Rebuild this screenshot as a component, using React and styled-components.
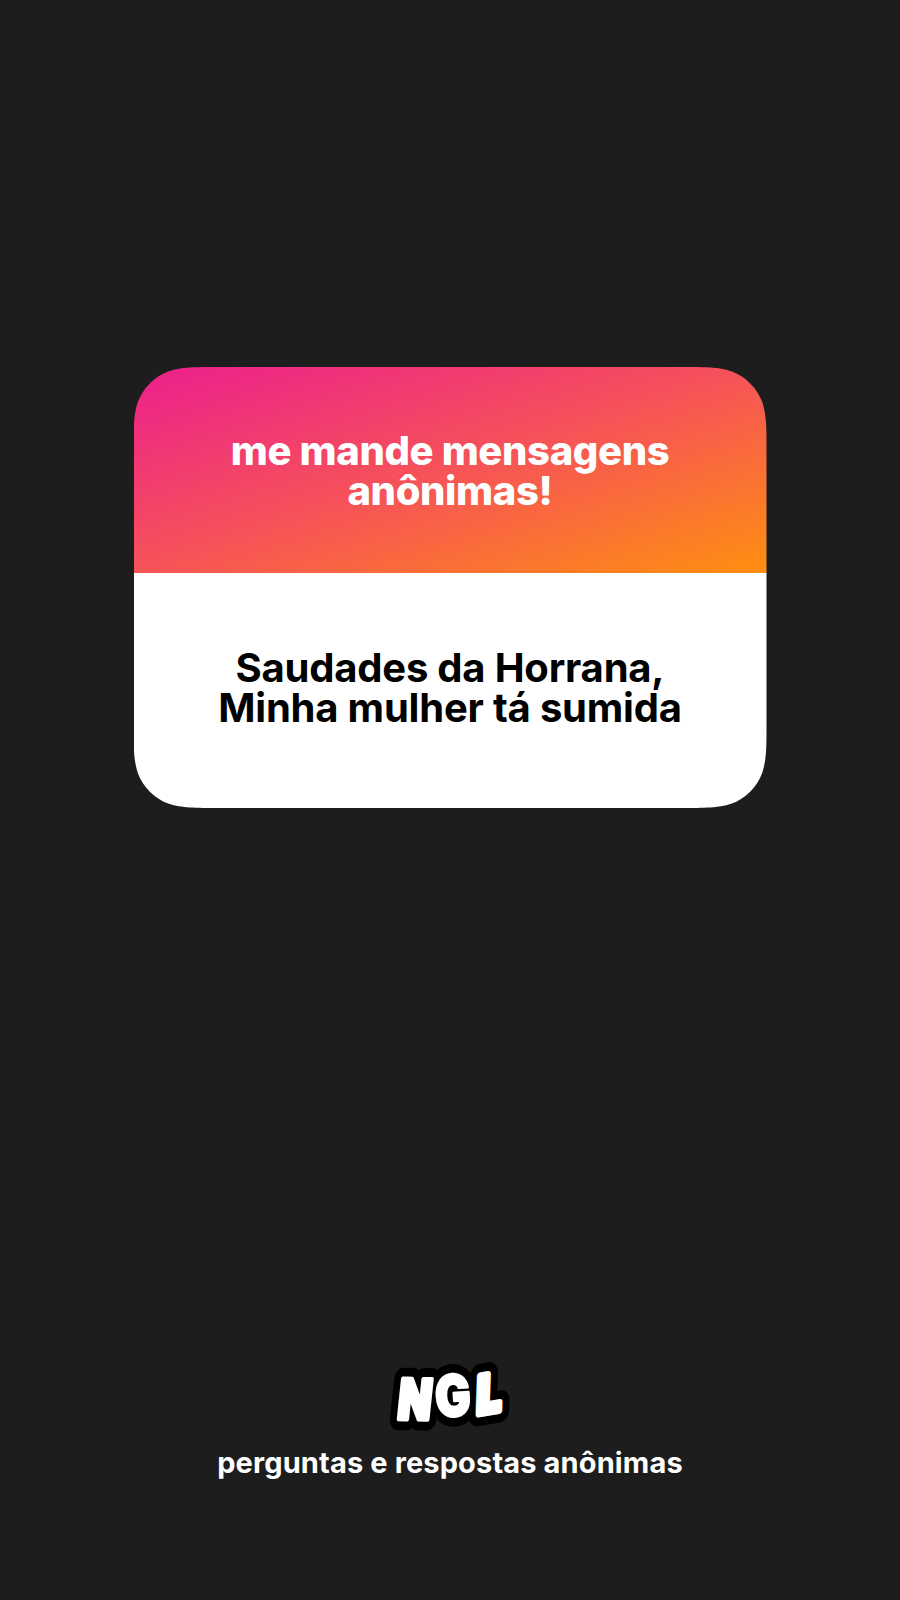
import React from "react";
import styled, { createGlobalStyle } from "styled-components";

const CARD_W = 633;
const CARD_H = 441;

// Rounded rectangle with continuous-curvature corners.
function squircle(w, h, r) {
  const p = [1.528665, 1.08849296, 0.86840694, 0.63149379, 0.07491139, 0.37282383, 0.16905956].map((v) => v * r);
  const [a, b, c, d, e, f, g] = p;
  return [
    `M${a} 0 L${w - a} 0`,
    `C${w - b} 0 ${w - c} 0 ${w - d} ${e}`,
    `C${w - f} ${g} ${w - g} ${f} ${w - e} ${d}`,
    `C${w} ${c} ${w} ${b} ${w} ${a} L${w} ${h - a}`,
    `C${w} ${h - b} ${w} ${h - c} ${w - e} ${h - d}`,
    `C${w - g} ${h - f} ${w - f} ${h - g} ${w - d} ${h - e}`,
    `C${w - c} ${h} ${w - b} ${h} ${w - a} ${h} L${a} ${h}`,
    `C${b} ${h} ${c} ${h} ${d} ${h - e}`,
    `C${f} ${h - g} ${g} ${h - f} ${e} ${h - d}`,
    `C0 ${h - c} 0 ${h - b} 0 ${h - a} L0 ${a}`,
    `C0 ${b} 0 ${c} ${e} ${d}`,
    `C${g} ${f} ${f} ${g} ${d} ${e}`,
    `C${c} 0 ${b} 0 ${a} 0 Z`,
  ].join(" ");
}

const GlobalStyle = createGlobalStyle`
  body { margin: 0; background: #1d1d1d; }
  *, *::before, *::after { box-sizing: border-box; }
`;

const Story = styled.main`
  display: flex;
  flex-direction: column;
  align-items: center;
  justify-content: space-between;
  width: 900px;
  height: 1600px;
  padding: 367px 0 117px;
  background: #1d1d1d;
  font-family: Inter, "Liberation Sans", sans-serif;
`;

const Card = styled.article`
  display: flex;
  flex-direction: column;
  width: ${CARD_W}px;
  height: ${CARD_H}px;
  clip-path: path("${squircle(CARD_W, CARD_H, 56)}");
`;

const Panel = styled.div`
  display: flex;
  flex-direction: column;
  align-items: center;
  text-align: center;
  white-space: nowrap;
`;

const Prompt = styled(Panel)`
  height: 206px;
  padding-top: 64px;
  background: linear-gradient(to bottom right, #ed2587 6%, #f65358 50%, #ff8f10);
  color: #fff;
`;

const Message = styled(Panel)`
  flex: 1;
  padding-top: 75px;
  background: #fff;
  color: #000;
`;

const Line = styled.span`
  font-size: ${(p) => p.$size}px;
  font-weight: ${(p) => p.$weight};
  line-height: 40.2px;
  letter-spacing: ${(p) => p.$track}px;
`;

const Footer = styled.footer`
  display: flex;
  flex-direction: column;
  align-items: center;
  gap: 2px;
  color: #fff;
`;

const Logo = styled.svg`
  display: block;
  width: 140px;
  height: 90px;
  font-family: Inter, sans-serif;
  font-weight: 900;
`;

const Glyph = styled.text`
  vector-effect: non-scaling-stroke;
  stroke-linejoin: round;
  stroke: ${(p) => p.$color};
  fill: ${(p) => p.$color};
`;

const LETTERS = [
  { char: "N", transform: "translate(16.4 67) rotate(1) skewX(-5) scale(0.78 1)", size: 55.5, weight: 4 },
  { char: "G", transform: "translate(56.6 65.4) rotate(-4) scale(0.82 1)", size: 57.5, weight: 2.2 },
  { char: "L", transform: "translate(96.2 62.6) rotate(-9) skewX(-11) scale(0.84 1)", size: 52, weight: 6 },
];

export default function App() {
  return (
    <>
      <GlobalStyle />
      <Story>
        <Card>
          <Prompt>
            <Line $size={40} $weight={820} $track={-0.36}>me mande mensagens</Line>
            <Line $size={40} $weight={820} $track={-0.36}>anônimas!</Line>
          </Prompt>
          <Message>
            <Line $size={40} $weight={650} $track={-0.2}>Saudades da Horrana,</Line>
            <Line $size={40} $weight={650} $track={-0.2}>Minha mulher tá sumida</Line>
          </Message>
        </Card>
        <Footer>
          <Logo viewBox="0 -1 140 90" role="img" aria-label="NGL">
            {LETTERS.map((l) => (
              <Glyph key={l.char} $color="#000" transform={l.transform} fontSize={l.size} strokeWidth={l.weight + 16} aria-hidden="true">{l.char}</Glyph>
            ))}
            {LETTERS.map((l) => (
              <Glyph key={l.char + "-face"} $color="#fff" transform={l.transform} fontSize={l.size} strokeWidth={l.weight}>{l.char}</Glyph>
            ))}
          </Logo>
          <Line $size={29} $weight={650} $track={0.13}>perguntas e respostas anônimas</Line>
        </Footer>
      </Story>
    </>
  );
}
